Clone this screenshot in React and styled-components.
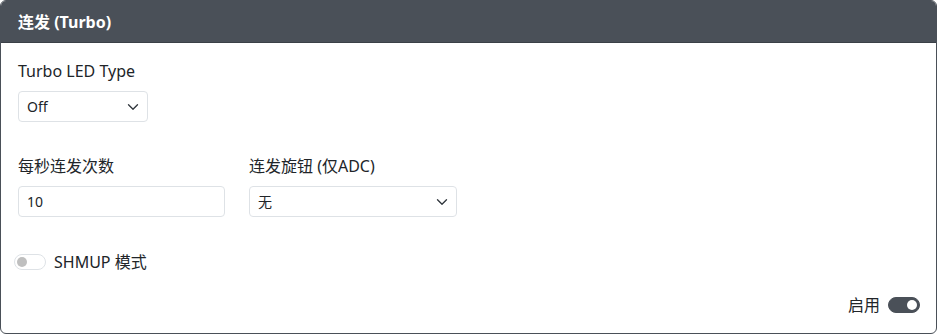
import React, { useState } from "react";
import styled, { createGlobalStyle } from "styled-components";

const GlobalStyle = createGlobalStyle`
  * { box-sizing: border-box; }
  body {
    margin: 0;
    background: #fff;
    color: #212529;
    font-family: "Noto Sans", "Noto Sans CJK SC", sans-serif;
    font-size: 16px;
    line-height: 1.5;
  }
`;

const Card = styled.section`
  width: 937px;
  height: 334px;
  border: 1px solid #4a5058;
  border-radius: 6px;
  overflow: hidden;
  display: flex;
  flex-direction: column;
  background: #fff;
`;

const CardHeader = styled.header`
  background: #4a5058;
  color: #fff;
  font-weight: 700;
  padding: 9px 17px 8px;
  line-height: 24px;
  border-bottom: 1px solid #3b4047;
`;

const CardBody = styled.div`
  flex: 1;
  padding: 16px 16px 16px 17px;
  display: flex;
  flex-direction: column;
`;

const Field = styled.div`
  display: flex;
  flex-direction: column;
  margin-bottom: ${({ $gap }) => $gap || 0}px;
`;

const Label = styled.label`
  line-height: 24px;
  margin-bottom: 8px;
`;

const Row = styled.div`
  display: grid;
  grid-template-columns: 207px 208px 1fr 1fr;
  column-gap: 24px;
  margin-bottom: 33px;
`;

const Control = styled.div`
  width: ${({ $w }) => ($w ? `${$w}px` : "100%")};
  height: 31px;
  border: 1px solid #dee2e6;
  border-radius: 4px;
  padding: 0 8px;
  font-size: 14px;
  display: flex;
  align-items: center;
  justify-content: space-between;
  background: #fff;
`;

const Chevron = () => (
  <svg width="12" height="8" viewBox="0 0 16 10" fill="none">
    <path d="M2 2l6 6 6-6" stroke="#343a40" strokeWidth="1.8" strokeLinecap="round" strokeLinejoin="round" />
  </svg>
);

const SwitchRow = styled.div`
  display: flex;
  align-items: center;
  gap: 8px;
  margin-left: -4px;
  height: 24px;
`;

const Track = styled.span`
  width: 32px;
  height: 16px;
  border-radius: 8px;
  border: 1px solid ${({ $on }) => ($on ? "#4a5058" : "#dee2e6")};
  background: ${({ $on }) => ($on ? "#4a5058" : "#fff")};
  display: flex;
  align-items: center;
  justify-content: ${({ $on }) => ($on ? "flex-end" : "flex-start")};
  padding: 0 2px;
  cursor: pointer;
`;

const Knob = styled.span`
  width: 10px;
  height: 10px;
  border-radius: 50%;
  background: ${({ $on }) => ($on ? "#fff" : "#bfbfbf")};
`;

const Footer = styled.div`
  margin-top: auto;
  display: flex;
  justify-content: flex-end;
  align-items: center;
  gap: 8px;
`;

function Switch({ on, onToggle }) {
  return (
    <Track $on={on} onClick={onToggle}>
      <Knob $on={on} />
    </Track>
  );
}

export default function App() {
  const [shmup, setShmup] = useState(false);
  const [enabled, setEnabled] = useState(true);
  return (
    <>
      <GlobalStyle />
      <Card>
        <CardHeader>连发 (Turbo)</CardHeader>
        <CardBody>
          <Field $gap={32}>
            <Label>Turbo LED Type</Label>
            <Control $w={130}>
              <span>Off</span>
              <Chevron />
            </Control>
          </Field>
          <Row>
            <Field>
              <Label>每秒连发次数</Label>
              <Control>10</Control>
            </Field>
            <Field>
              <Label>连发旋钮 (仅ADC)</Label>
              <Control>
                <span>无</span>
                <Chevron />
              </Control>
            </Field>
          </Row>
          <SwitchRow>
            <Switch on={shmup} onToggle={() => setShmup(!shmup)} />
            <span>SHMUP 模式</span>
          </SwitchRow>
          <Footer>
            <span>启用</span>
            <Switch on={enabled} onToggle={() => setEnabled(!enabled)} />
          </Footer>
        </CardBody>
      </Card>
    </>
  );
}
